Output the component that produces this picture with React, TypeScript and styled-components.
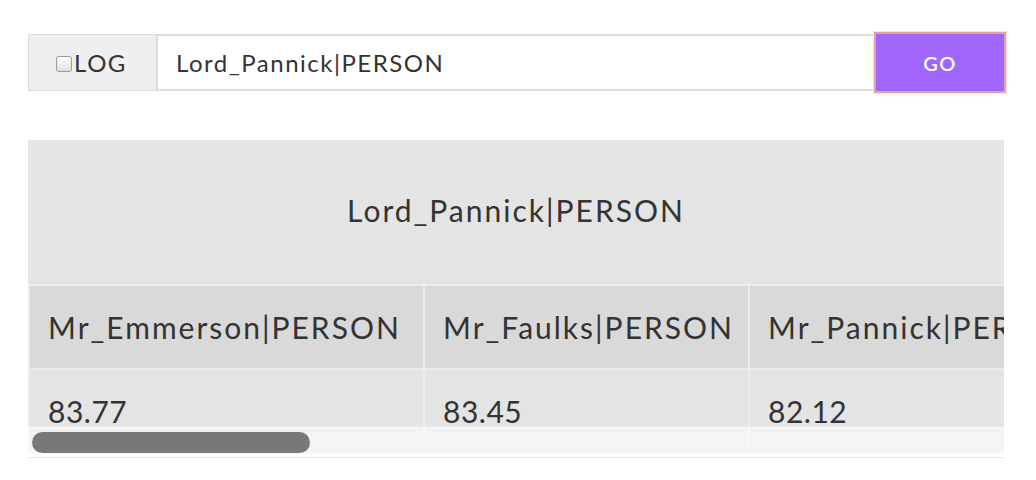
import styled, { createGlobalStyle } from 'styled-components';

const GlobalStyle = createGlobalStyle`
    body {
        margin: 0;
        background: #fff;
        font-family: Lato, "Open Sans", sans-serif;
        color: #333;
    }
`;

const Page = styled.div`
    width: 976px;
    padding: 34px 0 0 28px;
`;

const InputGroup = styled.div`
    display: flex;
    height: 57px;
`;

const Addon = styled.label`
    box-sizing: border-box;
    width: 128px;
    display: flex;
    align-items: center;
    justify-content: center;
    padding-right: 2px;
    background: #eeeff1;
    border: 1px solid #dcdcdc;
    border-right: none;
    font-size: 24px;
    letter-spacing: 1.5px;
    color: #333;
`;

const CheckBox = styled.input.attrs({ type: 'checkbox' })`
    appearance: none;
    flex: none;
    width: 16px;
    height: 16px;
    margin: 3px 2px 0 0;
    border: 1px solid #9a9a9a;
    border-radius: 3px;
    background: linear-gradient(#fdfdfd, #e2e2e2);
`;

const SearchInput = styled.input`
    flex: 1;
    min-width: 0;
    box-sizing: border-box;
    border: 2px solid #dcdcdc;
    padding: 0 18px;
    font-family: inherit;
    font-size: 24px;
    letter-spacing: 1.5px;
    color: #333;
    outline: none;
`;

const GoButton = styled.button`
    width: 128px;
    margin-left: 1px;
    border: none;
    background: #a066fb;
    color: #fff;
    font-family: inherit;
    font-size: 20px;
    font-weight: 600;
    letter-spacing: 1.5px;
    box-shadow: 0 0 0 2px #e6a2a2, 0 0 0 3px #f9e3e3;
    cursor: pointer;
`;

const Results = styled.section`
    margin-top: 49px;
`;

const TitleBar = styled.div`
    height: 144px;
    display: flex;
    align-items: center;
    justify-content: center;
    padding-bottom: 4px;
    box-sizing: border-box;
    background: #e4e4e4;
    font-size: 30px;
    letter-spacing: 2px;
    color: #333;
`;

const ScrollArea = styled.div`
    position: relative;
    height: 173px;
    overflow: hidden;
    border-bottom: 1px solid #e2e2e2;
`;

const Table = styled.table`
    table-layout: fixed;
    border-collapse: collapse;
    white-space: nowrap;
    font-size: 30px;
    color: #333;
`;

const Cell = styled.td<{ $head?: boolean }>`
    box-sizing: border-box;
    height: 84px;
    padding: 0 18px;
    border: 2px solid #ececec;
    text-align: left;
    font-weight: 400;
    letter-spacing: ${(p) => (p.$head ? '2px' : '0.5px')};
    overflow: hidden;
    background: ${(p) => (p.$head ? '#d9d9d9' : '#e4e4e4')};
`;

const ScrollTrack = styled.div`
    position: absolute;
    left: 0;
    right: 0;
    bottom: 0;
    height: 30px;
    background: rgba(255, 255, 255, 0.6);
    border-top: 1px solid rgba(0, 0, 0, 0.04);
`;

const ScrollThumb = styled.div`
    position: absolute;
    left: 4px;
    top: 5px;
    width: 278px;
    height: 21px;
    border-radius: 11px;
    background: #787878;
`;

const columns = [
    { name: 'Mr_Emmerson|PERSON', score: '83.77', width: 395 },
    { name: 'Mr_Faulks|PERSON', score: '83.45', width: 325 },
    { name: 'Mr_Pannick|PERSON', score: '82.12', width: 330 },
    { name: 'Lord_Faulks|PERSON', score: '81.90', width: 330 },
];

export default function App() {
    const tableWidth = columns.reduce((sum, c) => sum + c.width, 0);
    return (
        <>
            <GlobalStyle />
            <Page>
                <InputGroup>
                    <Addon>
                        <CheckBox />
                        LOG
                    </Addon>
                    <SearchInput defaultValue="Lord_Pannick|PERSON" />
                    <GoButton>GO</GoButton>
                </InputGroup>
                <Results>
                    <TitleBar>Lord_Pannick|PERSON</TitleBar>
                    <ScrollArea>
                        <Table style={{ width: tableWidth }}>
                            <colgroup>
                                {columns.map((c) => (
                                    <col key={c.name} style={{ width: c.width }} />
                                ))}
                            </colgroup>
                            <thead>
                                <tr>
                                    {columns.map((c) => (
                                        <Cell as="th" $head key={c.name}>
                                            {c.name}
                                        </Cell>
                                    ))}
                                </tr>
                            </thead>
                            <tbody>
                                <tr>
                                    {columns.map((c) => (
                                        <Cell key={c.name}>{c.score}</Cell>
                                    ))}
                                </tr>
                            </tbody>
                        </Table>
                        <ScrollTrack>
                            <ScrollThumb />
                        </ScrollTrack>
                    </ScrollArea>
                </Results>
            </Page>
        </>
    );
}
